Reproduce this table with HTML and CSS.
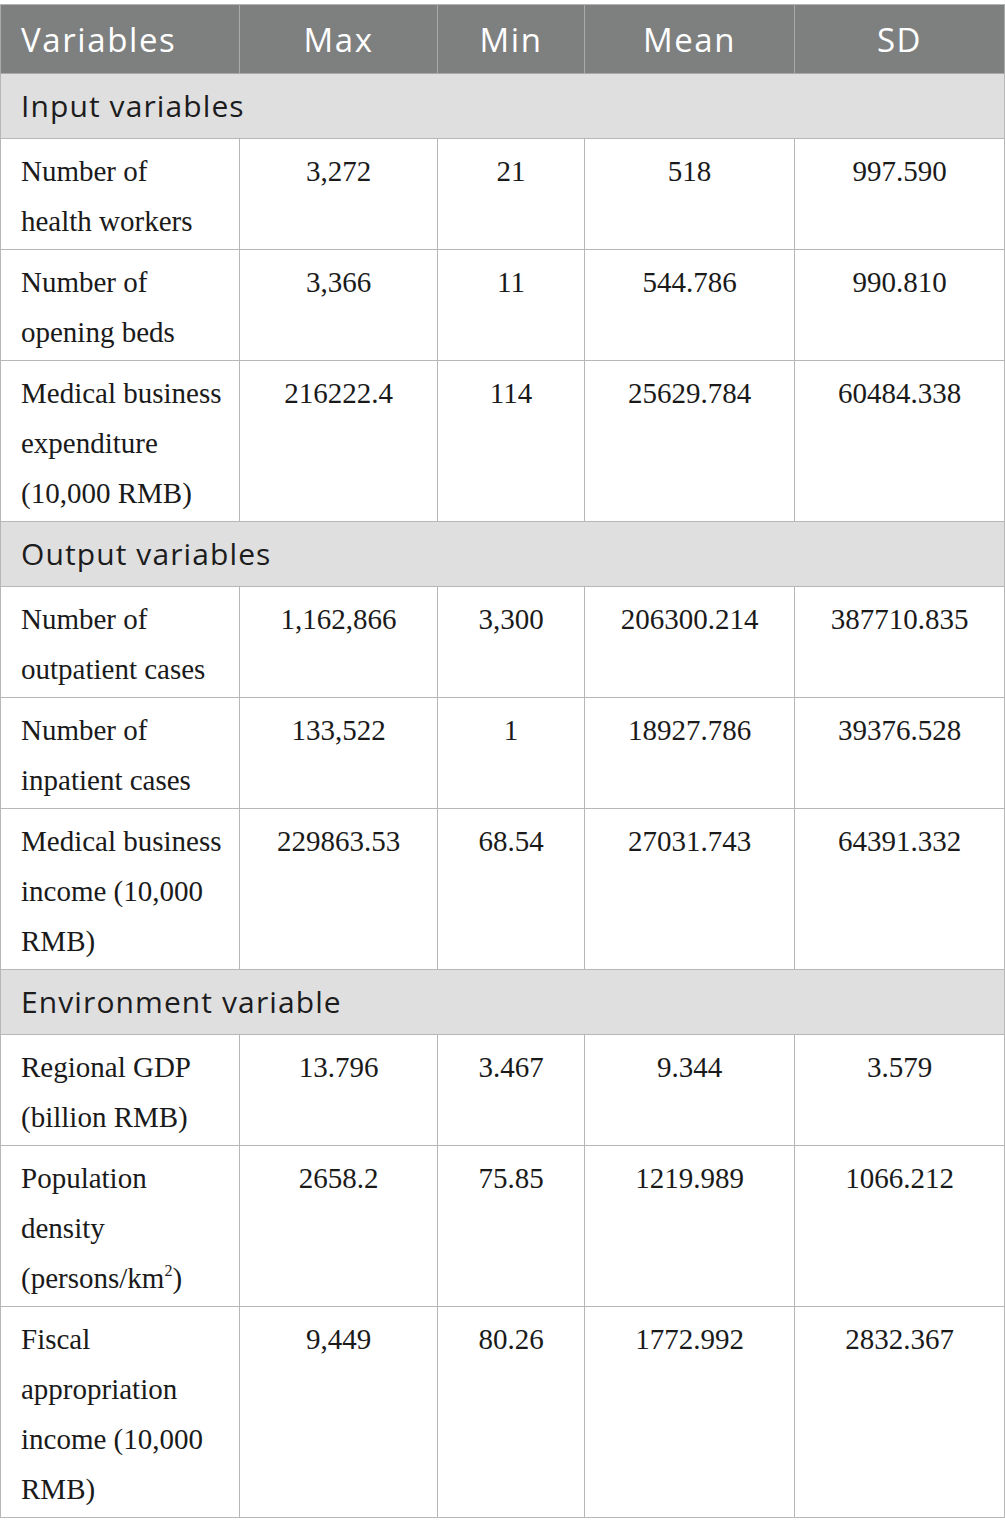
FILE: index.html
```html
<!DOCTYPE html>
<html lang="en">
<head>
<meta charset="utf-8">
<title>Variables</title>
<link rel="stylesheet" href="styles.css">
</head>
<body>
<div class="wrap">
<table class="data">
  <colgroup>
    <col class="c1"><col class="c2"><col class="c3"><col class="c4"><col class="c5">
  </colgroup>
  <thead>
    <tr>
      <th class="left">Variables</th>
      <th>Max</th>
      <th>Min</th>
      <th>Mean</th>
      <th>SD</th>
    </tr>
  </thead>
  <tbody>
    <tr class="section"><td colspan="5">Input variables</td></tr>
    <tr><td class="label">Number of<br>health workers</td><td>3,272</td><td>21</td><td>518</td><td>997.590</td></tr>
    <tr><td class="label">Number of<br>opening beds</td><td>3,366</td><td>11</td><td>544.786</td><td>990.810</td></tr>
    <tr><td class="label">Medical business<br>expenditure<br>(10,000 RMB)</td><td>216222.4</td><td>114</td><td>25629.784</td><td>60484.338</td></tr>
    <tr class="section"><td colspan="5">Output variables</td></tr>
    <tr><td class="label">Number of<br>outpatient cases</td><td>1,162,866</td><td>3,300</td><td>206300.214</td><td>387710.835</td></tr>
    <tr><td class="label">Number of<br>inpatient cases</td><td>133,522</td><td>1</td><td>18927.786</td><td>39376.528</td></tr>
    <tr><td class="label">Medical business<br>income (10,000<br>RMB)</td><td>229863.53</td><td>68.54</td><td>27031.743</td><td>64391.332</td></tr>
    <tr class="section"><td colspan="5">Environment variable</td></tr>
    <tr><td class="label">Regional GDP<br>(billion RMB)</td><td>13.796</td><td>3.467</td><td>9.344</td><td>3.579</td></tr>
    <tr><td class="label">Population<br>density<br>(persons/km<sup>2</sup>)</td><td>2658.2</td><td>75.85</td><td>1219.989</td><td>1066.212</td></tr>
    <tr><td class="label">Fiscal<br>appropriation<br>income (10,000<br>RMB)</td><td>9,449</td><td>80.26</td><td>1772.992</td><td>2832.367</td></tr>
  </tbody>
</table>
</div>
</body>
</html>
```

FILE: styles.css
```css
html, body {
  margin: 0;
  padding: 0;
  background: #ffffff;
}

.wrap {
  padding-top: 4px;
}

.data {
  border-collapse: collapse;
  table-layout: fixed;
  width: 1004px;
}

.c1 { width: 239px; }
.c2 { width: 198px; }
.c3 { width: 147px; }
.c4 { width: 210px; }
.c5 { width: 210px; }

.data th {
  background: #7e807f;
  color: #ffffff;
  font-family: "Open Sans", "DejaVu Sans", sans-serif;
  font-weight: 400;
  font-size: 33px;
  letter-spacing: 1.6px;
  height: 68px;
  padding: 0 20px;
  text-align: center;
  vertical-align: middle;
  border: 1px solid #a9abaa;
  border-top-color: #b5b5b5;
}

.data th.left {
  text-align: left;
}

.data td {
  font-family: "Liberation Serif", "Times New Roman", serif;
  font-size: 29px;
  line-height: 50px;
  color: #1a1a1a;
  text-align: center;
  vertical-align: top;
  padding: 7px 20px 3px 20px;
  border: 1px solid #b7b7b7;
}

.data td.label {
  text-align: left;
  white-space: nowrap;
  padding-right: 2px;
}

.data tr.section td {
  background: #e0dfe0;
  font-family: "Open Sans", "DejaVu Sans", sans-serif;
  font-size: 30px;
  letter-spacing: 1.1px;
  line-height: 40px;
  color: #1c1c1c;
  text-align: left;
  vertical-align: middle;
  height: 64px;
  padding: 0 20px;
}

.data sup {
  font-size: 16px;
  line-height: 0;
  vertical-align: 12px;
}
```
